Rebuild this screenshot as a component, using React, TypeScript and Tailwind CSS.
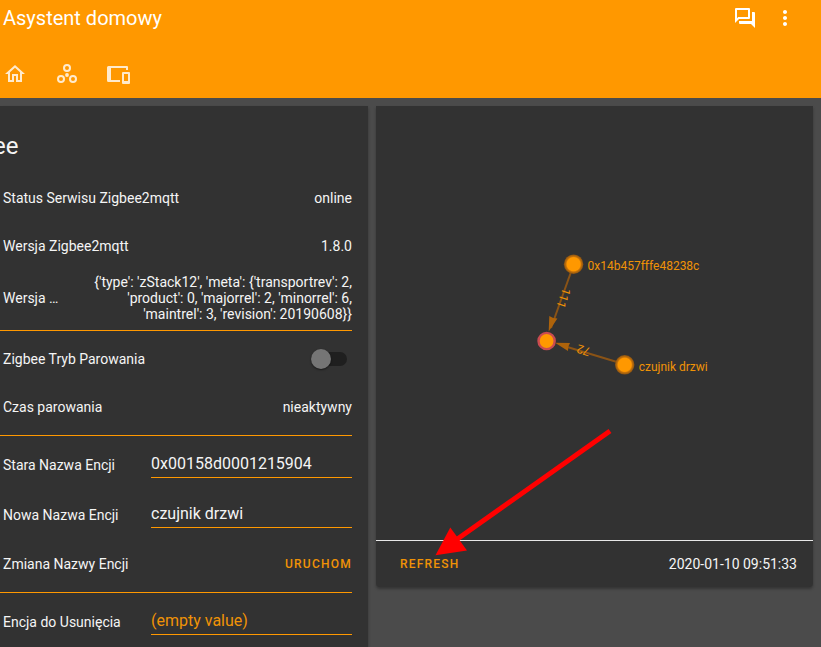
import React from 'react';
import { MdMoreVert, MdOutlineHome } from 'react-icons/md';

function Divider() {
  return <div className="mt-1 h-px bg-[#ff9800]" />;
}

function Row({ label, children, className = 'h-12' }: { label: string; children: React.ReactNode; className?: string }) {
  return (
    <div className={`flex items-center justify-between ${className}`}>
      <span className="whitespace-nowrap">{label}</span>
      {children}
    </div>
  );
}

function Field({ value, className = '' }: { value: string; className?: string }) {
  return (
    <div className={`mb-px h-[27px] w-[201px] border-b border-[#ff9800] text-[16px] leading-6 ${className}`}>
      <div className="pt-px">{value}</div>
    </div>
  );
}

function ZigbeeIcon() {
  return (
    <svg width="24" height="24" viewBox="0 0 24 24" fill="none" stroke="currentColor" strokeWidth="2">
      <circle cx="12" cy="6" r="3" />
      <circle cx="6" cy="17" r="3" />
      <circle cx="18" cy="17" r="3" />
      <circle cx="12" cy="13" r="1.9" fill="currentColor" stroke="none" />
    </svg>
  );
}

function DevicesIcon() {
  return (
    <svg width="24" height="24" viewBox="0 0 24 24" fill="currentColor" fillRule="evenodd">
      <path d="M1.5 4H20A1 1 0 0 1 21 5V8H19V6H4V18H13V20H1.5A1.5 1.5 0 0 1 0 18.5V5.5A1.5 1.5 0 0 1 1.5 4Z" />
      <path d="M16 10H22A1 1 0 0 1 23 11V21A1 1 0 0 1 22 22H16A1 1 0 0 1 15 21V11A1 1 0 0 1 16 10ZM17 12V19H21V12Z" />
    </svg>
  );
}

function Header() {
  return (
    <header className="h-[98px] bg-[#ff9800] text-white">
      <div className="flex h-9 items-center justify-between pl-[3px] pr-6">
        <h1 className="text-[20px] leading-6">Asystent domowy</h1>
        <div className="flex items-center gap-4">
          <svg width="24" height="24" viewBox="0 0 24 24" fill="currentColor">
            <path d="M15 4V11H5.17L4 12.17V4H15M16 2H3A1 1 0 0 0 2 3V17L6 13H16A1 1 0 0 0 17 12V3A1 1 0 0 0 16 2M21 6H19V15H6V17A1 1 0 0 0 7 18H18L22 22V7A1 1 0 0 0 21 6Z" />
          </svg>
          <MdMoreVert size={24} />
        </div>
      </div>
      <nav className="mt-[26px] flex gap-7 pl-[3px] text-white/80">
        <MdOutlineHome size={24} />
        <ZigbeeIcon />
        <DevicesIcon />
      </nav>
    </header>
  );
}

function NetworkMap() {
  return (
    <svg className="block" width="437" height="434" viewBox="376 106 437 434" fontFamily="Roboto, sans-serif" fontSize="12">
      <defs>
        <radialGradient id="node">
          <stop offset="0.68" stopColor="#ff9800" />
          <stop offset="0.8" stopColor="#c06f0a" />
          <stop offset="1" stopColor="#8a5312" />
        </radialGradient>
      </defs>
      <g stroke="#8a5316" strokeWidth="2">
        <path d="M571 272L551 328" />
        <path d="M617 362L564 346" />
      </g>
      <g fill="#ad630b">
        <path d="M548.7 331.5L549.3 316L553.2 318L557.4 318.5Z" />
        <path d="M555 342.7L570 343.1L568.3 346.8L568 351Z" />
      </g>
      <circle cx="573.6" cy="264.2" r="9.7" fill="url(#node)" />
      <circle cx="624.7" cy="364.8" r="9.7" fill="url(#node)" />
      <circle cx="546.6" cy="341" r="8.1" fill="#ff9800" stroke="#ca4b50" strokeWidth="2.4" />
      <g fill="#f09206">
        <text x="587.5" y="270">0x14b457fffe48238c</text>
        <text x="638.7" y="371">czujnik drzwi</text>
        <text transform="translate(563.5 298) rotate(109)" x="0" y="4" textAnchor="middle">111</text>
        <text transform="translate(583.5 350) rotate(197)" x="0" y="4" textAnchor="middle">72</text>
      </g>
    </svg>
  );
}

export default function App() {
  return (
    <div className="relative h-[647px] w-[821px] overflow-hidden bg-[#4b4b4b] font-[Roboto,sans-serif] text-[14px] leading-4 text-[#f5f5f5]">
      <Header />
      <main className="flex gap-2 pt-2">
        <section className="h-[541px] w-[368px] bg-[#323232] pl-[3px] pr-4 shadow-[0_2px_3px_rgba(0,0,0,0.3)]">
          <div className="-ml-[10px] h-[68px] pt-6 text-[24px] leading-8">ee</div>
          <Row label="Status Serwisu Zigbee2mqtt">online</Row>
          <Row label="Wersja Zigbee2mqtt">1.8.0</Row>
          <Row label="Wersja …" className="h-14">
            <div className="text-right">
              {"{'type': 'zStack12', 'meta': {'transportrev': 2,"}<br />
              {"'product': 0, 'majorrel': 2, 'minorrel': 6,"}<br />
              {"'maintrel': 3, 'revision': 20190608}}"}
            </div>
          </Row>
          <div className="-ml-[3px]"><Divider /></div>
          <Row label="Zigbee Tryb Parowania" className="mt-1 h-12">
            <div className="mr-[5px] flex h-[14px] w-9 items-center rounded-full bg-[#1f1f1f]">
              <div className="size-5 shrink-0 rounded-full bg-[#757575] shadow-[0_1px_2px_rgba(0,0,0,0.5)]" />
            </div>
          </Row>
          <Row label="Czas parowania">nieaktywny</Row>
          <div className="-ml-[3px]"><Divider /></div>
          <Row label="Stara Nazwa Encji" className="mt-1 h-[50px]"><Field value="0x00158d0001215904" /></Row>
          <Row label="Nowa Nazwa Encji" className="h-[50px]"><Field value="czujnik drzwi" /></Row>
          <Row label="Zmiana Nazwy Encji">
            <button className="text-[12px] font-medium tracking-[1.25px] text-[#f09206]">URUCHOM</button>
          </Row>
          <div className="-ml-[3px]"><Divider /></div>
          <Row label="Encja do Usunięcia" className="mt-1 h-[50px]"><Field value="(empty value)" className="text-[#f09206]" /></Row>
        </section>
        <section className="h-[481px] w-[437px] rounded-b-sm bg-[#323232] shadow-[0_2px_3px_rgba(0,0,0,0.3)]">
          <NetworkMap />
          <div className="flex h-[47px] items-center justify-between border-t border-[#e8e8e8] pl-6 pr-4">
            <button className="text-[12px] font-medium tracking-[1.2px] text-[#f09206]">REFRESH</button>
            <span>2020-01-10 09:51:33</span>
          </div>
        </section>
      </main>
      <svg className="absolute left-[430px] top-[425px]" width="190" height="135" viewBox="430 425 190 135">
        <path d="M610 431L456 540" stroke="#ff0000" strokeWidth="5" />
        <path d="M435.5 555.3L450.3 527.5L467 550.5Z" fill="#ff0000" />
      </svg>
    </div>
  );
}
